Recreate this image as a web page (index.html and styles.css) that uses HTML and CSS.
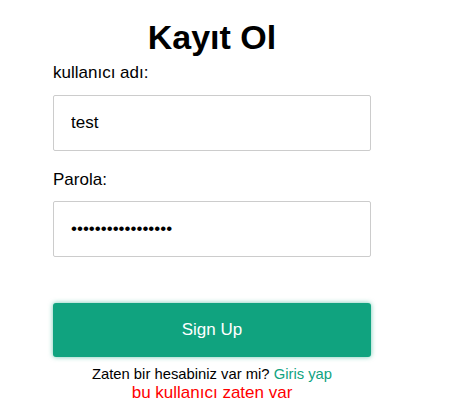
FILE: index.html
```html
<!DOCTYPE html>
<html lang="tr">
<head>
<meta charset="utf-8">
<title>Kayıt Ol</title>
<link rel="stylesheet" href="styles.css">
</head>
<body>
<div class="container">
  <h1 class="title">Kayıt Ol</h1>
  <form class="form">
    <label class="label" for="u">kullanıcı adı:</label>
    <input class="input" id="u" type="text" value="test">
    <label class="label label-second" for="p">Parola:</label>
    <input class="input" id="p" type="password" value="abcdefghijklmnopq">
    <button class="btn" type="button">Sign Up</button>
  </form>
  <p class="note">Zaten bir hesabiniz var mi? <a class="link" href="#">Giris yap</a></p>
  <p class="error">bu kullanıcı zaten var</p>
</div>
</body>
</html>
```
FILE: styles.css
```css
html, body {
  margin: 0;
  padding: 0;
  background: #fff;
}
body {
  font-family: "Liberation Sans", Arial, sans-serif;
  color: #000;
}
.container {
  width: 318px;
  margin-left: 53px;
  padding-top: 18px;
}
.title {
  margin: 0 0 7px;
  font-size: 34px;
  line-height: 38px;
  font-weight: bold;
  text-align: center;
}
.form {
  display: flex;
  flex-direction: column;
}
.label {
  font-size: 17px;
  line-height: 20px;
  margin-bottom: 12px;
}
.label-second {
  margin-bottom: 11px;
}
.input {
  box-sizing: border-box;
  width: 318px;
  height: 56px;
  margin: 0 0 19px;
  padding: 0 17px;
  border: 1px solid #cccccc;
  border-radius: 2px;
  font-family: "Liberation Sans", Arial, sans-serif;
  font-size: 17px;
  color: #000;
  outline: none;
}
.input + .btn {
  margin-top: 27px;
}
.btn {
  box-sizing: border-box;
  width: 318px;
  height: 54px;
  border: none;
  border-radius: 3px;
  background: #10a37f;
  color: #fff;
  font-family: "Liberation Sans", Arial, sans-serif;
  font-size: 17px;
  box-shadow: 0 0 5px rgba(16, 163, 127, 0.6);
  cursor: pointer;
}
.note {
  margin: 9px 0 0;
  font-size: 14.8px;
  line-height: 17px;
  text-align: center;
}
.link {
  color: #10a37f;
  text-decoration: none;
}
.error {
  margin: 0;
  font-size: 17px;
  line-height: 19px;
  text-align: center;
  color: #ff0000;
}
```
